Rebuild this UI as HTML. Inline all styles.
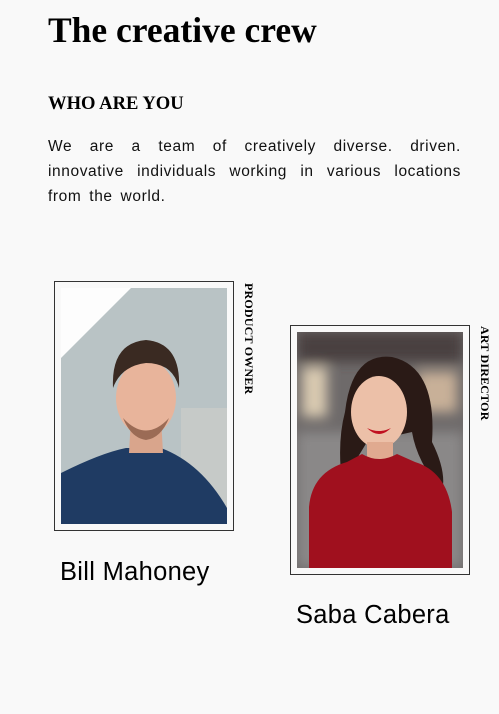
<!DOCTYPE html>
<html><head><meta charset="utf-8"><style>
html,body{margin:0;padding:0;}
body{width:499px;height:714px;background:#f9f9f9;position:relative;overflow:hidden;font-family:"Liberation Sans",sans-serif;color:#000;}
h1{position:absolute;left:48px;top:10px;margin:0;font-family:"Liberation Serif",serif;font-weight:bold;font-size:35.5px;line-height:40px;}
h2{position:absolute;left:48px;top:93px;margin:0;font-family:"Liberation Serif",serif;font-weight:bold;font-size:18.6px;line-height:22px;}
.p{position:absolute;left:48px;top:134px;width:413px;margin:0;font-size:15.5px;line-height:25px;color:#111;letter-spacing:0.6px;}
.p div{text-align:justify;text-align-last:justify;white-space:nowrap;}
.p div.l{text-align-last:left;word-spacing:3px;}
.card{position:absolute;width:180px;height:250px;border:1px solid #333;box-sizing:border-box;}
.ph{position:absolute;left:6px;top:6px;width:166px;height:236px;overflow:hidden;}
.lab{position:absolute;writing-mode:vertical-rl;font-family:"Liberation Serif",serif;font-weight:bold;font-size:12px;letter-spacing:0.2px;}
.nm{position:absolute;font-size:25.5px;line-height:28px;letter-spacing:0.3px;}
</style></head><body>
<h1>The creative crew</h1>
<h2>WHO ARE YOU</h2>
<div class="p">
<div style="display:flex;justify-content:space-between"><span>We</span><span>are</span><span>a</span><span>team</span><span>of</span><span>creatively</span><span>diverse.</span><span>driven.</span></div>
<div style="display:flex;justify-content:space-between"><span>innovative</span><span>individuals</span><span>working</span><span>in</span><span>various</span><span>locations</span></div>
<div class="l">from the world.</div>
</div>

<div class="card" style="left:54px;top:281px;">
 <div class="ph">
  <svg width="166" height="236" viewBox="0 0 166 236">
   <rect width="166" height="236" fill="#b9c3c5"/>
   <polygon points="0,0 70,0 0,70" fill="#fdfdfd"/>
   <rect x="120" y="120" width="46" height="116" fill="#c6cac8"/>
   <path d="M0,185 Q40,165 65,160 L100,160 Q140,175 166,220 L166,236 L0,236Z" fill="#1f3b63"/>
   <path d="M70,130 L100,130 L102,165 L68,165Z" fill="#d9a58c"/>
   <ellipse cx="85" cy="110" rx="30" ry="38" fill="#e8b49b"/>
   <path d="M52,100 Q50,55 85,52 Q120,55 118,100 Q112,75 85,75 Q60,78 52,100Z" fill="#3a2a22"/>
   <path d="M62,130 Q85,155 108,130 Q100,150 85,152 Q70,150 62,130Z" fill="#9b6b55"/>
  </svg>
 </div>
</div>
<div class="lab" style="left:241px;top:283px;">PRODUCT OWNER</div>
<div class="nm" style="left:60px;top:558px;">Bill Mahoney</div>

<div class="card" style="left:290px;top:325px;">
 <div class="ph">
  <svg width="166" height="236" viewBox="0 0 166 236">
   <defs><filter id="b"><feGaussianBlur stdDeviation="6"/></filter></defs>
   <rect width="166" height="236" fill="#6e6a6a"/>
   <g filter="url(#b)">
    <rect x="0" y="0" width="166" height="30" fill="#4a4040"/>
    <rect x="5" y="35" width="25" height="50" fill="#d8c9b0"/>
    <rect x="120" y="40" width="40" height="40" fill="#c8b098"/>
    <rect x="0" y="100" width="166" height="136" fill="#8a8888"/>
   </g>
   <path d="M48,80 Q55,20 95,25 Q140,35 135,110 Q150,140 145,160 Q120,130 115,100 L70,110 Q55,135 45,150 Q40,110 48,80Z" fill="#2a1a16"/>
   <ellipse cx="82" cy="80" rx="28" ry="36" fill="#ecc0a8"/>
   <path d="M70,96 Q82,108 94,96 Q82,102 70,96Z" fill="#c01020"/>
   <rect x="70" y="110" width="26" height="22" fill="#e0aa90"/>
   <path d="M12,236 L12,175 Q15,140 50,130 L65,122 Q82,132 100,122 L118,130 Q150,140 155,180 L155,236Z" fill="#a0101e"/>
  </svg>
 </div>
</div>
<div class="lab" style="left:477px;top:326px;">ART DIRECTOR</div>
<div class="nm" style="left:296px;top:601px;">Saba Cabera</div>
</body></html>
